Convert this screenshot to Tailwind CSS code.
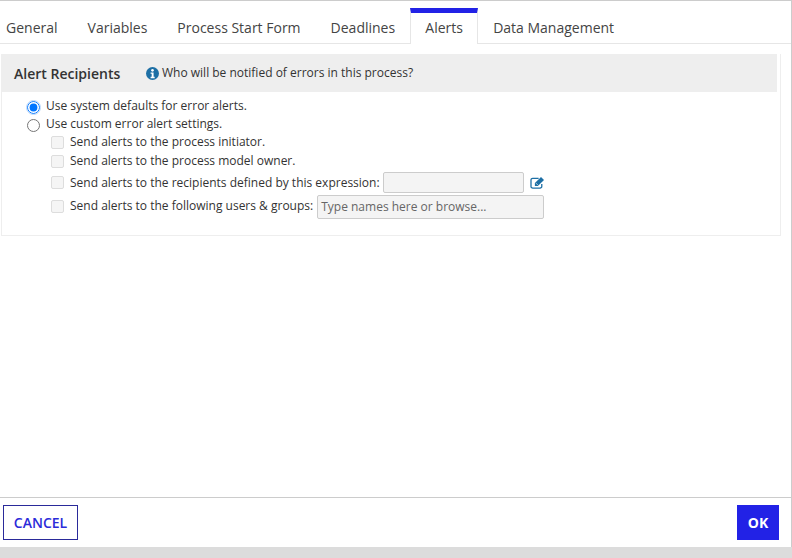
<!doctype html>
<html>
<head>
  <meta charset="UTF-8">
  <script src="https://cdn.jsdelivr.net/npm/@tailwindcss/browser@4"></script>
  <title>Process Model Properties</title>
</head>
<body class="bg-[#dcdcdc]">
  <div class="h-[558px] w-[792px] overflow-hidden flex flex-col font-['Open_Sans',sans-serif] text-[#333]">
    <div class="h-[547px] flex flex-col bg-white border-t border-r border-[#ccc]">

      <!-- tabs -->
      <div class="h-[43px] shrink-0 flex items-end border-b border-[#e6e6e6] text-[14px] text-[#444]">
        <div class="h-[35px] pl-[6px] pr-[15px] pt-[9px] leading-[22px]">General</div>
        <div class="h-[35px] px-[15px] pt-[9px] leading-[22px]">Variables</div>
        <div class="h-[35px] px-[15px] pt-[9px] leading-[22px]">Process Start Form</div>
        <div class="h-[35px] px-[15px] pt-[9px] leading-[22px]">Deadlines</div>
        <div class="h-[36px] w-[68px] -mb-px bg-white border-t-[5px] border-x border-t-[#2222e6] border-x-[#e6e6e6] text-center pt-[4px] leading-[22px]">Alerts</div>
        <div class="h-[35px] px-[15px] pt-[9px] leading-[22px]">Data Management</div>
      </div>

      <!-- alert recipients panel -->
      <div class="mt-[10px] ml-[1px] w-[780px] h-[182px] border border-[#eee] border-t-0 border-l-[#eee]">
        <div class="h-[38px] w-[775px] bg-[#eee] flex items-center pl-[12px]">
          <span class="text-[14px] font-semibold text-[#333] w-[132px]">Alert Recipients</span>
          <svg class="w-[13px] h-[13px] mr-[3px]" viewBox="0 0 24 24"><circle cx="12" cy="12" r="12" fill="#1d6fa5"/><circle cx="12" cy="6.2" r="2.4" fill="#fff"/><path d="M8.5 10.2h5.5v8h2v2.4H8.5v-2.4h2v-5.6h-2z" fill="#fff"/></svg>
          <span class="text-[12px] text-[#333]">Who will be notified of errors in this process?</span>
        </div>

        <div class="pl-[25px] pt-[5px] text-[12px] text-[#333]">
          <div class="h-[18px] flex items-center">
            <span class="flex w-[13px] h-[13px] mr-[6px] mt-[3px] rounded-full outline-1 outline-[#bcd8fa]">
              <input type="radio" name="alerts" checked class="appearance-auto w-[13px] h-[13px] accent-[#0075ff]">
            </span>
            <span class="-mt-px">Use system defaults for error alerts.</span>
          </div>
          <div class="h-[18px] flex items-center">
            <input type="radio" name="alerts" class="appearance-auto w-[13px] h-[13px] mr-[6px] mt-[3px]">
            <span class="-mt-px">Use custom error alert settings.</span>
          </div>
          <div class="pl-[24px]">
            <div class="h-[18px] flex items-center">
              <span class="w-[13px] h-[13px] mr-[6px] mt-[1px] rounded-[2px] border border-[#ddd] bg-[#f5f5f5]"></span>
              <span>Send alerts to the process initiator.</span>
            </div>
            <div class="h-[19px] flex items-center">
              <span class="w-[13px] h-[13px] mr-[6px] mt-[2px] rounded-[2px] border border-[#ddd] bg-[#f5f5f5]"></span>
              <span>Send alerts to the process model owner.</span>
            </div>
            <div class="h-[24px] flex items-center">
              <span class="w-[13px] h-[13px] mr-[6px] rounded-[2px] border border-[#ddd] bg-[#f5f5f5]"></span>
              <span class="mr-[3px] mt-[1px]">Send alerts to the recipients defined by this expression:</span>
              <div class="w-[141px] h-[21px] rounded-[2px] border border-[#ccc] bg-[#f4f4f4]"></div>
              <svg class="w-[15px] h-[13px] ml-[6px] mt-[1px]" viewBox="0 0 16 14" fill="none"><path d="M12.6 8.6v2.6a1.8 1.8 0 0 1-1.8 1.8H2.8A1.8 1.8 0 0 1 1 11.2V4.3a1.8 1.8 0 0 1 1.8-1.8h6.4" stroke="#1d6fa5" stroke-width="1.4"/><path d="M5.2 7.6 11.8 1l3.2 3.2-6.6 6.6H5.2z" fill="#1d6fa5"/><path d="M6.6 7.9l1.5 1.5" stroke="#fff" stroke-width="0.9"/></svg>
            </div>
            <div class="h-[24px] flex items-center">
              <span class="w-[13px] h-[13px] mr-[6px] rounded-[2px] border border-[#ddd] bg-[#f5f5f5]"></span>
              <span class="mr-[4px] -mt-[1px]">Send alerts to the following users &amp; groups:</span>
              <div class="w-[227px] h-[24px] mt-[2px] rounded-[2px] border border-[#ccc] bg-[#f4f4f4] pl-[3px] leading-[22px] text-[#666]">Type names here or browse...</div>
            </div>
          </div>
        </div>
      </div>

      <div class="flex-1"></div>

      <!-- footer -->
      <div class="h-[50px] shrink-0 border-t border-[#ccc] flex items-start justify-between pl-[3px] pr-[12px] pt-[7px]">
        <button class="w-[75px] h-[35px] border border-[#2a2a9a] bg-white text-[14px] font-semibold text-[#2b2bd9]">CANCEL</button>
        <button class="w-[42px] h-[35px] bg-[#2222e6] text-[14px] font-bold text-white">OK</button>
      </div>
    </div>
  </div>
</body>
</html>
